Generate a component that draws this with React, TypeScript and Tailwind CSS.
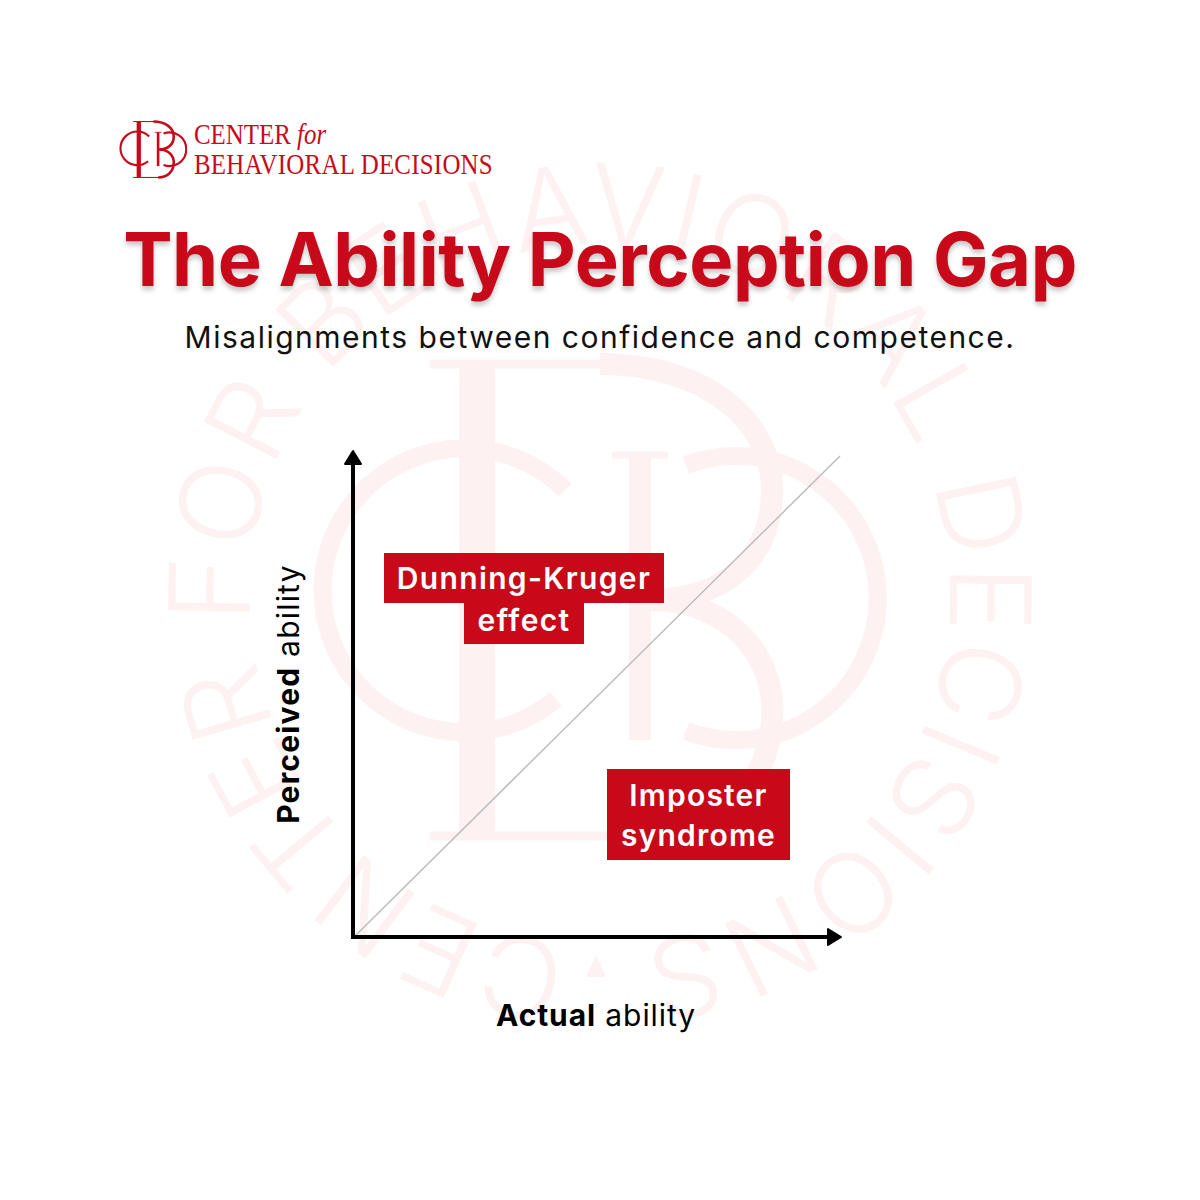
import React from "react";

const RED = "#c8091a";
const WASH = "#fdf1f1";

// monogram drawn in page coordinates of the big watermark; the small logo reuses it with a cropped viewBox
function MonogramPaths({ color }: { color: string }) {
  return (
    <g fill="none" stroke={color}>
      <path d="M 565 490 A 142 142 0 1 0 556 699" strokeWidth={18} />
      <path d="M 686 465 A 142 142 0 1 1 686 731" strokeWidth={18} />
      <path d="M 477 364 V 836" strokeWidth={36} />
      <path d="M 430 364 H 615" strokeWidth={9} />
      <path d="M 430 836 H 640" strokeWidth={9} />
      <path d="M 600 364 C 705 364 772 420 772 490 C 772 560 722 600 650 600" strokeWidth={22} />
      <path d="M 640 455 V 740" strokeWidth={22} />
      <path d="M 612 455 H 668" strokeWidth={7} />
      <path d="M 650 600 C 732 600 778 660 772 722 C 766 790 716 836 640 836" strokeWidth={22} />
    </g>
  );
}

function Watermark() {
  return (
    <svg className="absolute inset-0" width={1200} height={1200} viewBox="0 0 1200 1200">
      <defs>
        <path id="ring" d="M 569.5 943.7 A 350 350 0 1 1 630.5 943.7" />
      </defs>
      <text
        fill={WASH}
        fontSize={112}
        fontWeight={300}
        style={{ fontFamily: "Inter, sans-serif" }}
      >
        <textPath href="#ring" textLength={2125} lengthAdjust="spacing">
          CENTER FOR BEHAVIORAL DECISIONS
        </textPath>
      </text>
      <polygon points="596,955 586,977 606,977" fill={WASH} />
      <MonogramPaths color={WASH} />
    </svg>
  );
}

function Logo() {
  return (
    <div className="flex items-center gap-[7px]">
      <svg width={68} height={59} viewBox="310 352 574 496" className="shrink-0">
        <MonogramPaths color={RED} />
      </svg>
      <div
        className="origin-left scale-x-[0.83] text-[30px] leading-[30px] text-[#c8091a] whitespace-nowrap"
        style={{ fontFamily: '"Liberation Serif", serif' }}
      >
        <div>
          CENTER <span className="italic">for</span>
        </div>
        <div className="tracking-[0.01em]">BEHAVIORAL DECISIONS</div>
      </div>
    </div>
  );
}

function Chart() {
  return (
    <div className="relative ml-[260px] h-[510px] w-[600px]">
      <svg className="absolute inset-0" width={600} height={510} viewBox="0 0 600 510">
        <line x1={95} y1={495} x2={580} y2={15} stroke="#bdbdbd" strokeWidth={1.5} />
        <line x1={93} y1={22} x2={93} y2={498} stroke="#000" strokeWidth={4} />
        <line x1={91} y1={496} x2={570} y2={496} stroke="#000" strokeWidth={4} />
        <polygon points="93,10 85,23 101,23" fill="#000" stroke="#000" strokeWidth={2} strokeLinejoin="round" />
        <polygon points="581,496 568,488 568,504" fill="#000" stroke="#000" strokeWidth={2} strokeLinejoin="round" />
      </svg>

      <div className="absolute left-[28px] top-[253px] -translate-x-1/2 -translate-y-1/2 -rotate-90 whitespace-nowrap text-[30px] leading-none tracking-[0.04em] text-black">
        <span className="font-bold">Perceived</span> ability
      </div>

      <div className="absolute left-[122px] top-[112px] flex w-[284px] flex-col items-center text-[30px] font-semibold tracking-[0.045em] text-white">
        <span className="bg-[#c8091a] px-[13px] pt-[8px] pb-[7px] leading-[35px]">Dunning-Kruger</span>
        <span className="bg-[#c8091a] px-[13px] pb-[6px] leading-[35px]">effect</span>
      </div>

      <div className="absolute left-[347px] top-[328px] flex w-[183px] flex-col items-center bg-[#c8091a] pt-[6px] pb-[5px] text-[30px] font-semibold leading-[40px] tracking-[0.04em] text-white">
        <span>Imposter</span>
        <span>syndrome</span>
      </div>
    </div>
  );
}

export default function App() {
  return (
    <div
      className="relative h-[1200px] w-[1200px] overflow-hidden bg-white"
      style={{ fontFamily: "Inter, sans-serif" }}
    >
      <Watermark />
      <div className="relative flex flex-col">
        <div className="pt-[119px] pl-[119px]">
          <Logo />
        </div>
        <h1 className="mt-[40px] text-center text-[74px] font-bold leading-[80px] tracking-[-0.006em] text-[#c8091a] [text-shadow:0_4px_5px_rgba(0,0,0,0.22)]">
          The Ability Perception Gap
        </h1>
        <p className="mt-[20px] text-center text-[30px] leading-[36px] tracking-[0.05em] text-[#111]">
          Misalignments between confidence and competence.
        </p>
        <div className="mt-[86px]">
          <Chart />
        </div>
        <p className="mt-[46px] pr-[8px] text-center text-[30px] leading-[36px] tracking-[0.03em] text-black">
          <span className="font-bold">Actual</span> ability
        </p>
      </div>
    </div>
  );
}
